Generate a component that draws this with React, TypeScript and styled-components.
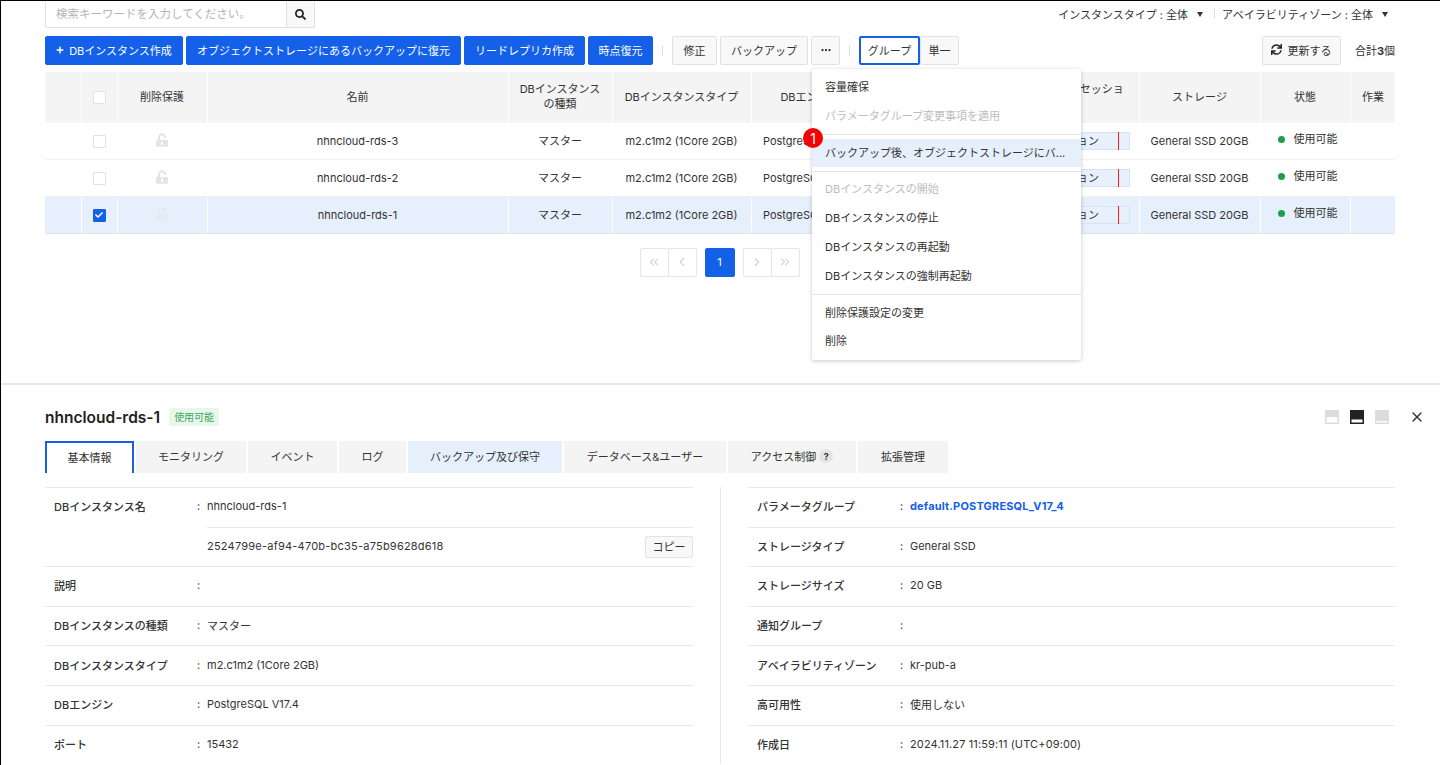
import React from 'react';
import styled, { createGlobalStyle } from 'styled-components';
import { FaCheck, FaPlus, FaSearch, FaSync, FaUnlockAlt } from 'react-icons/fa';
import { ChevronLeft, ChevronRight, ChevronsLeft, ChevronsRight, Ellipsis, X } from 'lucide-react';

const Blue = '#1460e8';
const Line = '#e8e8e8';
const columns = '37px 36px 90px 301px 104px 139px 118px 141px 129px 121px 90px 45px';

const GlobalStyle = createGlobalStyle`
  html, body {
    margin: 0;
    height: 765px;
    overflow: hidden;
    background: #fff;
  }
  * { box-sizing: border-box; }
  body {
    font-family: Inter, "Noto Sans CJK JP", sans-serif;
    font-size: 11px;
    color: #333;
  }
`;

const Page = styled.div`
  width: 1440px;
  height: 765px;
  overflow: hidden;
  border-top: 1px solid #000;
  border-left: 1px solid #000;
`;

// --------------- List pane

const ListPane = styled.section`
  position: relative;
  height: 382px;
  padding: 0 45px 0 44px;
`;

const FilterRow = styled.div`
  display: flex;
  align-items: center;
  justify-content: space-between;
  height: 27px;
`;

const SearchBox = styled.div`
  display: flex;
  width: 270px;
  height: 27px;
  border: 1px solid #e2e2e2;
  border-top: 0;
  border-radius: 0 0 2px 2px;
`;

const SearchText = styled.div`
  flex: 1;
  padding-left: 10px;
  font-size: 11.5px;
  line-height: 27px;
  color: #b4b4b4;
`;

const SearchButton = styled.div`
  display: flex;
  align-items: center;
  justify-content: center;
  width: 28px;
  background: #f8f8f8;
  border-left: 1px solid #e2e2e2;
  color: #222;
  font-size: 11px;
`;

const Filters = styled.div`
  display: flex;
  align-items: center;
  padding: 0 7px 2px 0;
`;

const Filter = styled.span`
  display: flex;
  align-items: center;
  gap: 9px;
`;

const Caret = styled.i`
  width: 0;
  height: 0;
  margin-top: 2px;
  border-left: 3.5px solid transparent;
  border-right: 3.5px solid transparent;
  border-top: 5px solid #333;
`;

const FilterSep = styled.span`
  width: 1px;
  height: 11px;
  margin: 0 7px 0 11px;
  background: #ddd;
`;

const ActionRow = styled.div`
  display: flex;
  align-items: center;
  height: 29px;
  margin: 8px 0 7px;
`;

const Button = styled.button<{ $primary?: boolean; $w: number; $active?: boolean }>`
  display: flex;
  align-items: center;
  justify-content: center;
  gap: 5px;
  flex: none;
  width: ${(p) => p.$w}px;
  height: 29px;
  margin-right: 3px;
  padding: 0 0 2px;
  border: 1px solid ${(p) => (p.$primary ? Blue : '#e2e2e2')};
  border-radius: 2px;
  background: ${(p) => (p.$primary ? Blue : '#f8f8f8')};
  color: ${(p) => (p.$primary ? '#fff' : '#333')};
  font: inherit;
  svg { flex: none; }
  ${(p) => p.$active && `border: 2px solid ${Blue}; background: #fff; margin-right: 0;`}
`;

const ToolSep = styled.span`
  width: 1px;
  height: 11px;
  margin: 0 9px 0 6px;
  background: #ddd;
`;

const Spacer = styled.div`
  flex: 1;
`;

const Total = styled.span`
  margin-left: 11px;
  padding-bottom: 2px;
  b { font-weight: 700; }
`;

const TableRow = styled.div<{ $head?: boolean; $selected?: boolean }>`
  display: grid;
  grid-template-columns: ${columns};
  height: ${(p) => (p.$head ? '50.5px' : '37px')};
  padding-top: ${(p) => (p.$head ? '0' : '1px')};
  background: ${(p) => (p.$head ? '#f4f4f4' : p.$selected ? '#e6effc' : '#fff')};
  border-bottom: ${(p) => (p.$head ? '0' : `1px solid ${p.$selected ? '#dfe5ee' : '#f1f1f1'}`)};
`;

const Cell = styled.div<{ $left?: boolean }>`
  display: flex;
  align-items: center;
  justify-content: ${(p) => (p.$left ? 'flex-start' : 'center')};
  padding: ${(p) => (p.$left ? '0 0 0 11px' : '0 5px 0 4px')};
  border-right: 1px solid #fff;
  text-align: center;
  line-height: 15px;
  white-space: pre-line;
  overflow: hidden;
  min-width: 0;
  &:last-child { border-right: 0; }
`;

const Check = styled.span<{ $on?: boolean }>`
  display: flex;
  align-items: center;
  justify-content: center;
  width: 13px;
  height: 13px;
  border: 1px solid ${(p) => (p.$on ? Blue : '#e2e2e2')};
  border-radius: 1px;
  background: ${(p) => (p.$on ? Blue : '#fff')};
  color: #fff;
  font-size: 8px;
`;

const LockIcon = styled(FaUnlockAlt)<{ $faint?: boolean }>`
  width: 12px;
  height: 14px;
  margin-top: -2px;
  color: ${(p) => (p.$faint ? '#e6e9ee' : '#e4e4e4')};
`;

const SessionBar = styled.div`
  position: relative;
  display: flex;
  justify-content: flex-end;
  align-items: center;
  width: 108px;
  height: 18px;
  padding-right: 30px;
  background: #e8f0fc;
  border: 1px solid #d5e3fa;
  &::after {
    content: '';
    position: absolute;
    top: -1px;
    bottom: -1px;
    right: 10px;
    width: 1px;
    background: #ff1a1a;
  }
`;

const StatusText = styled.span`
  display: flex;
  align-items: center;
  gap: 9px;
  margin: -4px 0 0 5px;
`;

const Dot = styled.i`
  width: 7px;
  height: 7px;
  border-radius: 50%;
  background: #1e9e46;
`;

const Pager = styled.div`
  display: flex;
  justify-content: center;
  margin-top: 14px;
  gap: 9px;
`;

const PagerGroup = styled.div`
  display: flex;
`;

const PageCell = styled.div<{ $active?: boolean }>`
  display: flex;
  align-items: center;
  justify-content: center;
  width: ${(p) => (p.$active ? '30px' : '29px')};
  height: 29px;
  margin-left: -1px;
  border: 1px solid ${(p) => (p.$active ? Blue : '#e6e6e6')};
  border-radius: 2px;
  background: ${(p) => (p.$active ? Blue : '#fff')};
  color: ${(p) => (p.$active ? '#fff' : '#d2d2d2')};
`;

const Menu = styled.div`
  position: absolute;
  top: 68px;
  left: 811px;
  width: 269px;
  height: 291px;
  padding: 4px 0;
  background: #fff;
  border-radius: 2px;
  box-shadow: 0 1px 4px rgba(0, 0, 0, 0.22);
`;

const MenuItem = styled.div<{ $disabled?: boolean; $hover?: boolean }>`
  height: 28.8px;
  padding: 0 13px;
  line-height: 28px;
  color: ${(p) => (p.$disabled ? '#bdbdbd' : '#333')};
  background: ${(p) => (p.$hover ? '#e6effc' : 'transparent')};
  white-space: nowrap;
`;

const MenuDivider = styled.div`
  height: 1px;
  margin: 3.5px 0;
  background: #e4e4e4;
`;

const Badge = styled.span`
  position: absolute;
  top: 59px;
  left: -9px;
  display: flex;
  align-items: center;
  justify-content: center;
  width: 20px;
  height: 20px;
  border-radius: 50%;
  background: #f40000;
  color: #fff;
  font-size: 14px;
`;

// --------------- Detail pane

const DetailPane = styled.section`
  height: 381px;
  padding: 23px 45px 0 44px;
  border-top: 2px solid #e8e8e8;
`;

const TitleRow = styled.div`
  display: flex;
  align-items: center;
  height: 18px;
  margin-bottom: 15px;
`;

const Title = styled.h2`
  margin: 0 9px 0 0;
  font-size: 15.5px;
  font-weight: 600;
  color: #222;
`;

const StateTag = styled.span`
  padding: 0 5px;
  height: 18px;
  line-height: 18px;
  font-size: 10px;
  color: #3aa85c;
  background: #e9f6ec;
  border-radius: 2px;
`;

const PaneIcons = styled.div`
  display: flex;
  align-items: center;
  gap: 11px;
  margin: 0 -30px 0 auto;
  svg { display: block; }
`;

const CloseIcon = styled(X)`
  margin-left: 9px;
  color: #333;
`;

const Tabs = styled.div`
  display: flex;
  gap: 2px;
  margin-bottom: 14px;
`;

const Tab = styled.div<{ $w: number; $active?: boolean; $tint?: boolean }>`
  display: flex;
  align-items: center;
  justify-content: center;
  gap: 3px;
  width: ${(p) => p.$w}px;
  height: 32px;
  padding-bottom: 2px;
  background: ${(p) => (p.$active ? '#fff' : p.$tint ? '#e6effc' : '#f4f4f4')};
  border: ${(p) => (p.$active ? `2px solid ${Blue}` : '0')};
  border-bottom: 0;
`;

const Help = styled.span`
  display: inline-flex;
  align-items: center;
  justify-content: center;
  width: 14px;
  height: 14px;
  border-radius: 50%;
  background: #e4e4e4;
  font-size: 9px;
  font-weight: 700;
`;

const DetailGrid = styled.div`
  display: grid;
  grid-template-columns: 648px 1fr;
  column-gap: 55px;
`;

const DetailColumn = styled.div<{ $divided?: boolean }>`
  position: relative;
  ${(p) =>
    p.$divided &&
    `&::before {
      content: '';
      position: absolute;
      left: -28px;
      top: 0;
      bottom: 0;
      width: 1px;
      background: ${Line};
    }`}
`;

const DetailRow = styled.div`
  display: grid;
  grid-template-columns: 143px 10px 1fr;
  align-items: center;
  height: 39.6px;
  padding: 0 0 2px 9px;
  border-top: 1px solid ${Line};
`;

const NestedRow = styled.div`
  display: flex;
  align-items: center;
  justify-content: space-between;
  height: 39.6px;
  margin-left: 162px;
  border-top: 1px solid ${Line};
`;

const Uuid = styled.span`
  letter-spacing: 0.22px;
  padding-bottom: 2px;
`;

const Label = styled.div`
  font-weight: 500;
`;

const Value = styled.span<{ $wide?: boolean }>`
  letter-spacing: ${(p) => (p.$wide ? '0.13px' : 'normal')};
`;

const ValueLink = styled.span`
  color: #1460e8;
  font-weight: 700;
  letter-spacing: 0.17px;
`;

const CopyButton = styled.button`
  width: 48px;
  height: 22px;
  padding: 0 0 2px;
  border: 1px solid #e2e2e2;
  border-radius: 2px;
  background: #f8f8f8;
  color: #333;
  font: inherit;
`;

const rows = [
  { name: 'nhncloud-rds-3', selected: false },
  { name: 'nhncloud-rds-2', selected: false },
  { name: 'nhncloud-rds-1', selected: true },
];

const heads = [
  '',
  null,
  '削除保護',
  '名前',
  'DBインスタンス\nの種類',
  'DBインスタンスタイプ',
  'DBエンジン',
  '',
  '総アクセスセッショ\nン',
  'ストレージ',
  '状態',
  '作業',
];

const leftDetails = [
  ['説明', ''],
  ['DBインスタンスの種類', 'マスター'],
  ['DBインスタンスタイプ', 'm2.c1m2 (1Core 2GB)'],
  ['DBエンジン', 'PostgreSQL V17.4'],
  ['ポート', '15432'],
];

const rightDetails = [
  ['ストレージタイプ', 'General SSD'],
  ['ストレージサイズ', '20 GB'],
  ['通知グループ', ''],
  ['アベイラビリティゾーン', 'kr-pub-a'],
  ['高可用性', '使用しない'],
  ['作成日', '2024.11.27 11:59:11 (UTC+09:00)'],
];

const tabs = [
  { label: '基本情報', w: 89, active: true },
  { label: 'モニタリング', w: 110 },
  { label: 'イベント', w: 89 },
  { label: 'ログ', w: 67 },
  { label: 'バックアップ及び保守', w: 154, tint: true },
  { label: 'データベース&ユーザー', w: 162 },
  { label: 'アクセス制御', w: 128, help: true },
  { label: '拡張管理', w: 90 },
];

const PaneIcon = ({ dark, bar }: { dark?: boolean; bar: [number, number] }) => (
  <svg width="14" height="14" viewBox="0 0 14 14">
    <rect width="14" height="14" fill={dark ? '#222' : '#dcdcdc'} />
    <rect x="1.5" y={bar[0]} width="11" height={bar[1]} fill="#fff" />
  </svg>
);

const App = () => (
  <Page>
    <GlobalStyle />
    <ListPane>
      <FilterRow>
        <SearchBox>
          <SearchText>検索キーワードを入力してください。</SearchText>
          <SearchButton>
            <FaSearch />
          </SearchButton>
        </SearchBox>
        <Filters>
          <Filter>
            インスタンスタイプ : 全体 <Caret />
          </Filter>
          <FilterSep />
          <Filter>
            アベイラビリティゾーン : 全体 <Caret />
          </Filter>
        </Filters>
      </FilterRow>

      <ActionRow>
        <Button $primary $w={138}>
          <FaPlus size={8} /> DBインスタンス作成
        </Button>
        <Button $primary $w={275}>
          オブジェクトストレージにあるバックアップに復元
        </Button>
        <Button $primary $w={121}>
          リードレプリカ作成
        </Button>
        <Button $primary $w={65}>
          時点復元
        </Button>
        <ToolSep />
        <Button $w={45}>修正</Button>
        <Button $w={88}>バックアップ</Button>
        <Button $w={29}>
          <Ellipsis size={12} strokeWidth={2.5} color="#222" />
        </Button>
        <ToolSep />
        <Button $w={61} $active>
          グループ
        </Button>
        <Button $w={39}>単一</Button>
        <Spacer />
        <Button $w={79}>
          <FaSync size={11} color="#222" /> 更新する
        </Button>
        <Total>
          合計<b>3</b>個
        </Total>
      </ActionRow>

      <TableRow $head>
        {heads.map((head, i) => (
          <Cell key={i}>{head === null ? <Check /> : head}</Cell>
        ))}
      </TableRow>
      {rows.map((row) => (
        <TableRow key={row.name} $selected={row.selected}>
          <Cell />
          <Cell>
            <Check $on={row.selected}>{row.selected && <FaCheck />}</Check>
          </Cell>
          <Cell>
            <LockIcon $faint={row.selected} />
          </Cell>
          <Cell>{row.name}</Cell>
          <Cell>マスター</Cell>
          <Cell>m2.c1m2 (1Core 2GB)</Cell>
          <Cell $left>PostgreSQL V17.4</Cell>
          <Cell />
          <Cell $left>
            <SessionBar>セッション</SessionBar>
          </Cell>
          <Cell>General SSD 20GB</Cell>
          <Cell>
            <StatusText>
              <Dot />
              使用可能
            </StatusText>
          </Cell>
          <Cell />
        </TableRow>
      ))}

      <Pager>
        <PagerGroup>
          <PageCell>
            <ChevronsLeft size={14} />
          </PageCell>
          <PageCell>
            <ChevronLeft size={14} />
          </PageCell>
        </PagerGroup>
        <PageCell $active>1</PageCell>
        <PagerGroup>
          <PageCell>
            <ChevronRight size={14} />
          </PageCell>
          <PageCell>
            <ChevronsRight size={14} />
          </PageCell>
        </PagerGroup>
      </Pager>

      <Menu>
        <Badge>1</Badge>
        <MenuItem>容量確保</MenuItem>
        <MenuItem $disabled>パラメータグループ変更事項を適用</MenuItem>
        <MenuDivider />
        <MenuItem $hover>バックアップ後、オブジェクトストレージにバ...</MenuItem>
        <MenuDivider />
        <MenuItem $disabled>DBインスタンスの開始</MenuItem>
        <MenuItem>DBインスタンスの停止</MenuItem>
        <MenuItem>DBインスタンスの再起動</MenuItem>
        <MenuItem>DBインスタンスの強制再起動</MenuItem>
        <MenuDivider />
        <MenuItem>削除保護設定の変更</MenuItem>
        <MenuItem>削除</MenuItem>
      </Menu>
    </ListPane>

    <DetailPane>
      <TitleRow>
        <Title>nhncloud-rds-1</Title>
        <StateTag>使用可能</StateTag>
        <PaneIcons>
          <PaneIcon bar={[7, 5.5]} />
          <PaneIcon dark bar={[9.5, 3]} />
          <PaneIcon bar={[11, 1.5]} />
          <CloseIcon size={16} strokeWidth={2} />
        </PaneIcons>
      </TitleRow>

      <Tabs>
        {tabs.map((tab) => (
          <Tab key={tab.label} $w={tab.w} $active={tab.active} $tint={tab.tint}>
            {tab.label}
            {tab.help && <Help>?</Help>}
          </Tab>
        ))}
      </Tabs>

      <DetailGrid>
        <DetailColumn>
          <DetailRow>
            <Label>DBインスタンス名</Label>
            <span>:</span>
            <span>nhncloud-rds-1</span>
          </DetailRow>
          <NestedRow>
            <Uuid>2524799e-af94-470b-bc35-a75b9628d618</Uuid>
            <CopyButton>コピー</CopyButton>
          </NestedRow>
          {leftDetails.map(([label, value]) => (
            <DetailRow key={label}>
              <Label>{label}</Label>
              <span>:</span>
              <span>{value}</span>
            </DetailRow>
          ))}
        </DetailColumn>
        <DetailColumn $divided>
          <DetailRow>
            <Label>パラメータグループ</Label>
            <span>:</span>
            <ValueLink>default.POSTGRESQL_V17_4</ValueLink>
          </DetailRow>
          {rightDetails.map(([label, value]) => (
            <DetailRow key={label}>
              <Label>{label}</Label>
              <span>:</span>
              <Value $wide={label === '作成日'}>{value}</Value>
            </DetailRow>
          ))}
        </DetailColumn>
      </DetailGrid>
    </DetailPane>
  </Page>
);

export default App;
